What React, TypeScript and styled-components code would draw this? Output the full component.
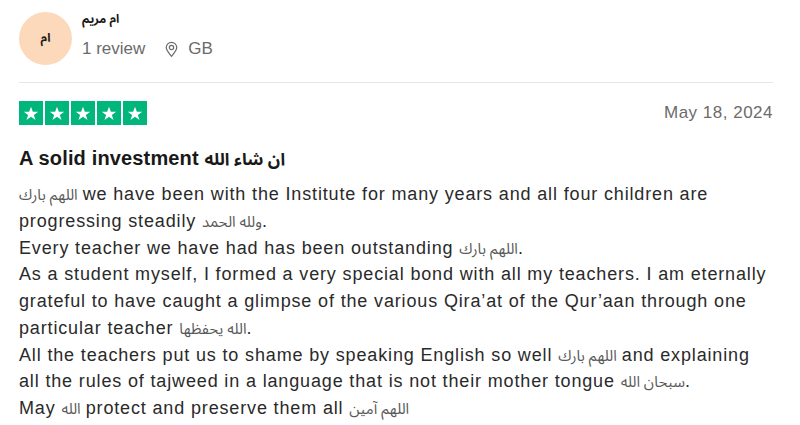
import React from "react";
import styled, { createGlobalStyle } from "styled-components";

const Global = createGlobalStyle`
  html, body { margin: 0; padding: 0; background: #fff; }
  body { font-family: "Liberation Sans", Arial, "Noto Sans", sans-serif; color: #191919; }
`;

const Card = styled.article`
  width: 754px;
  padding: 12px 0 0 19px;
  box-sizing: content-box;
`;

const Consumer = styled.header`
  display: flex;
  align-items: center;
  gap: 10px;
  padding-bottom: 17px;
  border-bottom: 1px solid #e8e8e1;
`;

const Avatar = styled.div`
  width: 53px;
  height: 53px;
  border-radius: 50%;
  background: #fdd9bb;
  display: flex;
  align-items: center;
  justify-content: center;
  font-size: 12px;
  font-weight: 700;
  color: #1c1c1c;
  font-family: "Noto Sans Arabic", "DejaVu Sans", sans-serif;
`;

const Info = styled.div`
  display: flex;
  flex-direction: column;
  gap: 12px;
  margin-top: -6px;
`;

const Name = styled.div`
  font-size: 12px;
  line-height: 15px;
  font-weight: 700;
  color: #191919;
  font-family: "Noto Sans Arabic", "DejaVu Sans", sans-serif;
`;

const Meta = styled.div`
  display: flex;
  align-items: center;
  gap: 19px;
  font-size: 17px;
  color: #6b6b6b;
`;

const MetaItem = styled.span`
  display: inline-flex;
  align-items: center;
  gap: 9px;
`;

const TopRow = styled.div`
  display: flex;
  justify-content: space-between;
  align-items: center;
  margin-top: 18px;
`;

const Stars = styled.div`
  display: flex;
  gap: 2px;
`;

const Star = styled.div`
  width: 24px;
  height: 24px;
  background: #00b67a;
  display: flex;
  align-items: center;
  justify-content: center;
`;

const DateText = styled.time`
  font-size: 17px;
  letter-spacing: 0.5px;
  color: #6b6b6b;
`;

const Title = styled.h2`
  margin: 22px 0 0;
  font-size: 20px;
  letter-spacing: 0.15px;
  font-weight: 700;
  color: #191919;
`;

const Body = styled.p`
  margin: 11px 0 0;
  max-width: 752px;
  font-size: 18px;
  letter-spacing: 0.85px;
  line-height: 26.75px;
  color: #2a2a2a;
  white-space: pre-line;
`;

const Ar = styled.span<{ $bold?: boolean }>`
  font-family: "Noto Sans Arabic", "DejaVu Sans", sans-serif;
  letter-spacing: 0;
  line-height: 1;
  font-size: ${(p) => (p.$bold ? "17px" : "15px")};
  font-weight: ${(p) => (p.$bold ? 700 : 400)};
  color: ${(p) => (p.$bold ? "#191919" : "#5a5a5a")};
`;

const StarIcon = () => (
  <svg width="16" height="16" viewBox="0 0 24 24">
    <path
      fill="#fff"
      d="M12 2.5l2.75 7.6h8.1l-6.55 4.75 2.5 7.65L12 17.75 5.2 22.5l2.5-7.65L1.15 10.1h8.1z"
    />
  </svg>
);

const PinIcon = () => (
  <svg width="15" height="18" viewBox="0 0 16 18" fill="none" stroke="#6b6b6b" strokeWidth="1.3">
    <path d="M8 16.8c-3.2-3.6-5.6-6.4-5.6-9.3a5.6 5.6 0 0 1 11.2 0c0 2.9-2.4 5.7-5.6 9.3z" />
    <circle cx="8" cy="7.4" r="2.3" />
  </svg>
);

export default function App() {
  return (
    <>
      <Global />
      <Card>
        <Consumer>
          <Avatar>ام</Avatar>
          <Info>
            <Name>ام مريم</Name>
            <Meta>
              <MetaItem>1 review</MetaItem>
              <MetaItem>
                <PinIcon />
                GB
              </MetaItem>
            </Meta>
          </Info>
        </Consumer>
        <TopRow>
          <Stars>
            {[0, 1, 2, 3, 4].map((i) => (
              <Star key={i}>
                <StarIcon />
              </Star>
            ))}
          </Stars>
          <DateText>May 18, 2024</DateText>
        </TopRow>
        <Title>
          A solid investment <Ar $bold>ان شاء الله</Ar>
        </Title>
        <Body>
          <Ar>اللهم بارك</Ar> we have been with the Institute for many years and all four children are
          progressing steadily <Ar>ولله الحمد</Ar>.{"\n"}
          Every teacher we have had has been outstanding <Ar>اللهم بارك</Ar>.{"\n"}
          As a student myself, I formed a very special bond with all my teachers. I am eternally
          grateful to have caught a glimpse of the various Qira’at of the Qur’aan through one
          particular teacher <Ar>الله يحفظها</Ar>.{"\n"}
          All the teachers put us to shame by speaking English so well <Ar>اللهم بارك</Ar> and explaining
          all the rules of tajweed in a language that is not their mother tongue <Ar>سبحان الله</Ar>.{"\n"}
          May <Ar>الله</Ar> protect and preserve them all <Ar>اللهم آمين</Ar>
        </Body>
      </Card>
    </>
  );
}
